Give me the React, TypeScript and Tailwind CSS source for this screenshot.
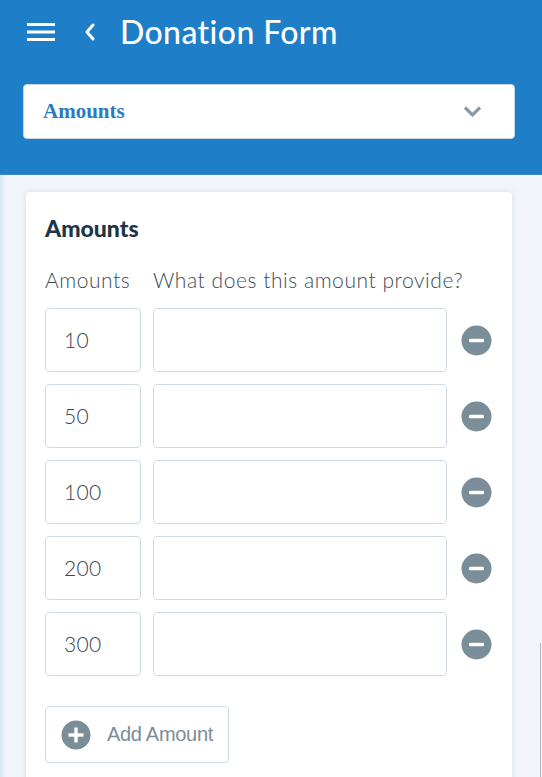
import React from "react";

const rows = ["10", "50", "100", "200", "300"];

function MinusIcon() {
  return (
    <svg width="31" height="31" viewBox="0 0 31 31">
      <circle cx="15.5" cy="15.5" r="15" fill="#7b8d99" />
      <rect x="8" y="13.7" width="15" height="3.6" rx="1.4" fill="#fff" />
    </svg>
  );
}

export default function App() {
  return (
    <div className="w-[542px] h-[777px] overflow-hidden bg-[#f2f6fa] relative" style={{ fontFamily: "Lato, 'Open Sans', sans-serif" }}>
      <div className="absolute left-0 top-[175px] bottom-0 w-[6px] bg-gradient-to-r from-[#dce8f4] to-[#f2f6fa]"></div>
      <div className="absolute right-[1px] top-[643px] bottom-0 w-[1px] bg-[#b0b4b8]"></div>
      <div className="bg-[#1f7ec8] h-[175px] pl-[23px] pr-[27px] pt-[12px] border-b border-[#3a8ccb]">
        <div className="flex items-center h-[40px]">
          <svg width="30" height="20" viewBox="0 0 30 20" className="ml-[4px]">
            <rect x="0" y="1" width="28" height="3" fill="#fff" />
            <rect x="0" y="8.5" width="28" height="3" fill="#fff" />
            <rect x="0" y="16" width="28" height="3" fill="#fff" />
          </svg>
          <svg width="14" height="20" viewBox="0 0 14 20" className="ml-[26px]">
            <path d="M10 3 L4 10 L10 17" stroke="#fff" strokeWidth="3" fill="none" strokeLinecap="round" strokeLinejoin="round" />
          </svg>
          <div className="ml-[23px] text-white text-[32px] font-medium leading-none tracking-[0.4px]">Donation Form</div>
        </div>
        <div className="mt-[32px] h-[55px] bg-white rounded-[4px] border border-[#c9d6e0] flex items-center justify-between pl-[19px] pr-[32px]">
          <span className="text-[#2a7bc0] font-bold text-[21px]" style={{ fontFamily: "'Liberation Serif', serif" }}>Amounts</span>
          <svg width="19" height="13" viewBox="0 0 19 13">
            <path d="M2 2.5 L9.5 10 L17 2.5" stroke="#8a9aa6" strokeWidth="3.2" fill="none" />
          </svg>
        </div>
      </div>
      <div className="pl-[26px] pr-[30px] pt-[17px]">
        <div className="bg-white rounded-[4px] shadow-[0_0_6px_rgba(120,150,180,0.25)] px-[19px] pt-[22px] pb-[20px] min-h-[620px]">
          <div className="text-[#1d3545] font-black text-[23px] leading-[28px]">Amounts</div>
          <div className="flex mt-[25px] text-[#3a4c58] text-[21px] font-light tracking-[0.55px] leading-[26px]">
            <div className="w-[108px]">Amounts</div>
            <div>What does this amount provide?</div>
          </div>
          <div className="mt-[15px] flex flex-col gap-[12px]">
            {rows.map((r) => (
              <div key={r} className="flex items-center">
                <div className="w-[96px] h-[64px] border border-[#cfdbe3] rounded-[4px] flex items-center pl-[18px] text-[21px] font-light tracking-[0.3px] text-[#33454f]">{r}</div>
                <div className="ml-[12px] w-[294px] h-[64px] border border-[#cfdbe3] rounded-[4px]"></div>
                <div className="ml-[14px]"><MinusIcon /></div>
              </div>
            ))}
          </div>
          <div className="mt-[30px] w-[184px] h-[57px] border border-[#cfdbe3] rounded-[4px] flex items-center pl-[15px]">
            <svg width="30" height="30" viewBox="0 0 30 30">
              <circle cx="15" cy="15" r="14.5" fill="#7b8d99" />
              <rect x="7.5" y="13.3" width="15" height="3.4" fill="#fff" />
              <rect x="13.3" y="7.5" width="3.4" height="15" fill="#fff" />
            </svg>
            <span className="ml-[16px] text-[#7b8d99] text-[20px] tracking-[-0.3px] leading-none -mt-[2px]" style={{ fontFamily: "'Liberation Sans', Arial, sans-serif" }}>Add Amount</span>
          </div>
        </div>
      </div>
    </div>
  );
}
